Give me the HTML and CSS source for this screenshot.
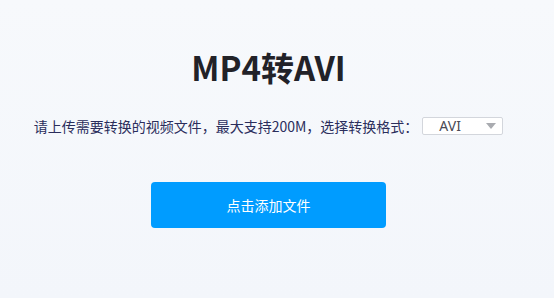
FILE: index.html
```html
<!DOCTYPE html>
<html lang="zh-CN">
<head>
<meta charset="utf-8">
<title>MP4转AVI</title>
<link rel="stylesheet" href="styles.css">
</head>
<body>
<main class="page">
  <h1 class="title">MP4转AVI</h1>
  <div class="tip">
    <span class="tip-text">请上传需要转换的视频文件，最大支持200M，选择转换格式：</span>
    <div class="select">
      <span class="select-value">AVI</span>
      <span class="select-arrow"></span>
    </div>
  </div>
  <button class="upload-btn" type="button">点击添加文件</button>
</main>
</body>
</html>
```

FILE: styles.css
```css
html, body {
  margin: 0;
  padding: 0;
}
body {
  width: 554px;
  height: 298px;
  background: linear-gradient(180deg, #f7f9fc 0%, #f3f6fb 100%);
  font-family: "Noto Sans CJK SC", "Noto Sans", sans-serif;
  overflow: hidden;
}
.page {
  width: 537px;
  display: flex;
  flex-direction: column;
  align-items: center;
  padding-top: 47px;
}
.title {
  margin: 0;
  font-size: 33px;
  line-height: 40px;
  font-weight: 700;
  color: #222228;
  letter-spacing: 0;
}
.tip {
  margin-top: 29px;
  display: flex;
  align-items: center;
}
.tip-text {
  font-size: 14px;
  line-height: 20px;
  color: #2b2e5c;
  white-space: nowrap;
}
.select {
  margin-left: 4px;
  width: 79px;
  height: 16px;
  border: 1px solid #d3d6dc;
  border-radius: 2px;
  background: #ffffff;
  display: flex;
  align-items: center;
  justify-content: space-between;
  box-sizing: content-box;
}
.select-value {
  margin-left: 16px;
  font-family: "Noto Sans", sans-serif;
  font-size: 14px;
  line-height: 16px;
  color: #4a4a55;
}
.select-arrow {
  width: 0;
  height: 0;
  margin-right: 6px;
  border-left: 5px solid transparent;
  border-right: 5px solid transparent;
  border-top: 6px solid #a9abb0;
}
.upload-btn {
  margin-top: 46px;
  width: 235px;
  height: 46px;
  border: none;
  border-radius: 4px;
  background: #009cff;
  color: #ffffff;
  font-family: "Noto Sans CJK SC", sans-serif;
  font-size: 14px;
  cursor: pointer;
}
```
